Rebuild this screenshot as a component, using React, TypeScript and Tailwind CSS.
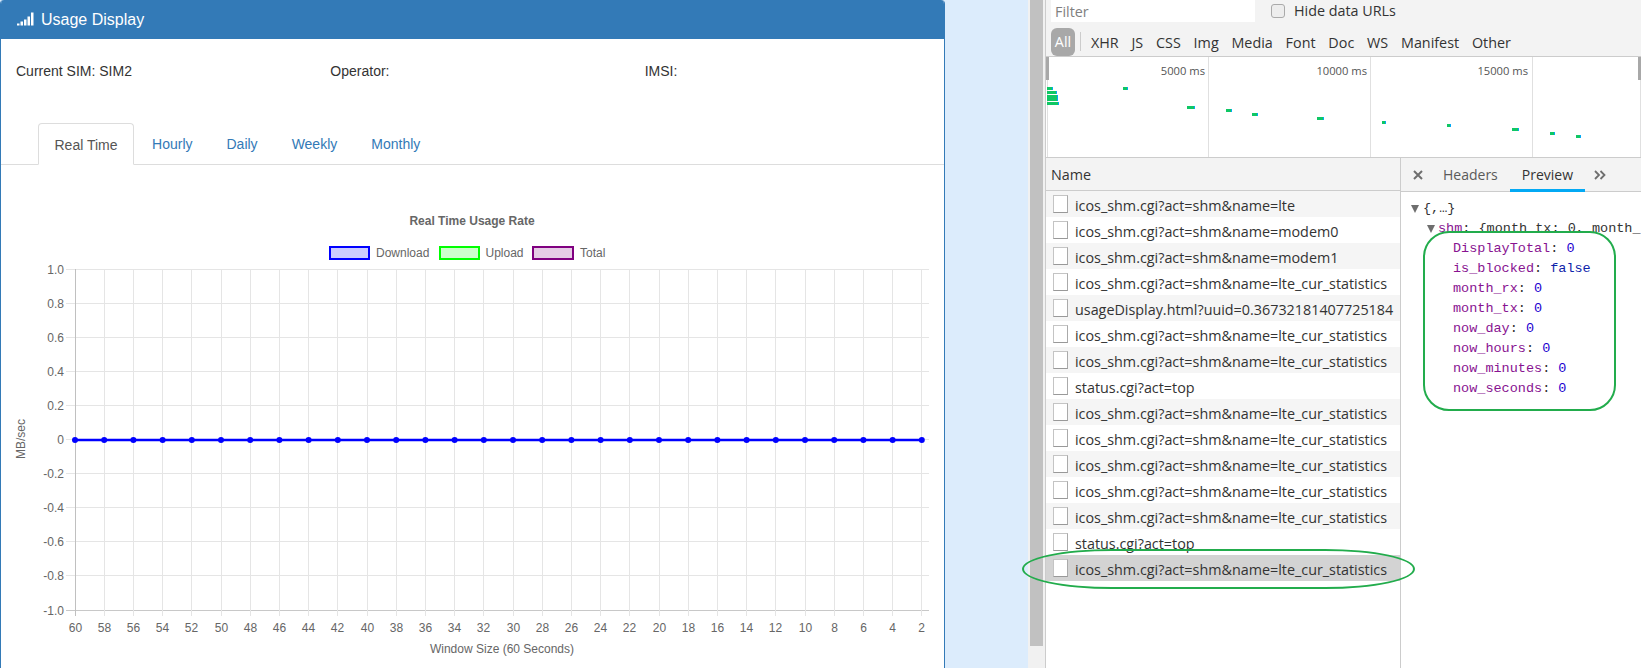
import React from "react";

const sans = "font-['Liberation_Sans',Arial,sans-serif]";
const ui = "font-['Open_Sans','Noto_Sans',sans-serif]";
const mono = "font-['Liberation_Mono',monospace]";

const yLabels = ["1.0", "0.8", "0.6", "0.4", "0.2", "0", "-0.2", "-0.4", "-0.6", "-0.8", "-1.0"];
const xLabels = Array.from({ length: 30 }, (_, i) => 60 - i * 2);
const X0 = 75;
const DX = 29.2;
const Y0 = 269.5;
const DY = 34.05;

function Chart() {
  return (
    <svg width={943} height={503} viewBox="1 165 943 503" className="block">
      <g fontFamily="'Liberation Sans', Arial, sans-serif" fontSize="12" fill="#666">
        {yLabels.map((l, i) => {
          const y = Math.floor(Y0 + DY * i) + 0.5;
          const strong = l === "-1.0";
          return (
            <g key={l}>
              <line x1={66} x2={929} y1={y} y2={y} stroke={strong ? "#c8c8c8" : "#e5e5e5"} />
              <text x={64} y={y + 4} textAnchor="end">{l}</text>
            </g>
          );
        })}
        {xLabels.map((l, i) => {
          const x = Math.floor(X0 + DX * i) + 0.5;
          return (
            <g key={l}>
              <line x1={x} x2={x} y1={269} y2={616} stroke={i === 0 ? "#c0c0c0" : "#e5e5e5"} />
              <text x={x} y={632} textAnchor="middle">{l}</text>
            </g>
          );
        })}
        <line x1={X0} x2={922} y1={440} y2={440} stroke="#0000ff" strokeWidth={2.6} />
        {xLabels.map((l, i) => (
          <circle key={l} cx={X0 + DX * i} cy={440} r={3} fill="#0000ff" />
        ))}
        <text x={472} y={225} textAnchor="middle" fontWeight="bold">Real Time Usage Rate</text>
        <rect x={330} y={247} width={39} height={12} fill="#ccccff" stroke="#0000ff" strokeWidth={2} />
        <text x={376} y={257}>Download</text>
        <rect x={440} y={247} width={39} height={12} fill="#ccffcc" stroke="#00ff00" strokeWidth={2} />
        <text x={485.5} y={257}>Upload</text>
        <rect x={533} y={247} width={40} height={12} fill="#e6cce6" stroke="#800080" strokeWidth={2} />
        <text x={580} y={257}>Total</text>
        <text transform="translate(25 439) rotate(-90)" textAnchor="middle">MB/sec</text>
        <text x={502} y={653} textAnchor="middle">Window Size (60 Seconds)</text>
      </g>
    </svg>
  );
}

function LeftPanel() {
  const tabs = ["Hourly", "Daily", "Weekly", "Monthly"];
  return (
    <div className={`${sans} w-[945px] h-full shrink-0 bg-white border-x border-[#337ab7] rounded-t-[4px] overflow-hidden flex flex-col text-[14px] text-[#333]`}>
      <div className="h-[39px] bg-[#337ab7] text-white text-[16px] flex items-center pl-[17px] gap-[7px] shrink-0 -mx-px">
        <svg width="17" height="14" viewBox="0 0 17 14" fill="#fff" className="mt-[-1px]">
          <rect x="0" y="11.5" width="2.5" height="2" />
          <rect x="3.5" y="9.5" width="2.5" height="4" />
          <rect x="7" y="7.5" width="2.5" height="6" />
          <rect x="10.5" y="4.5" width="2.5" height="9" />
          <rect x="14" y="0.5" width="2.5" height="13" />
        </svg>
        <span>Usage Display</span>
      </div>
      <div className="grid grid-cols-3 h-[84px] pt-[22px] shrink-0">
        <div className="px-[15px]">Current SIM: SIM2</div>
        <div className="px-[15px]">Operator:</div>
        <div className="px-[15px]">IMSI:</div>
      </div>
      <div className="flex h-[42px] pl-[37px] border-b border-[#ddd] gap-[2px] shrink-0">
        <div className="h-[42px] pt-[2px] px-[15.5px] flex items-center text-[#555] bg-white border border-[#ddd] border-b-white rounded-t-[4px]">Real Time</div>
        {tabs.map((t) => (
          <div key={t} className="pt-[2px] px-[16px] flex items-center text-[#337ab7]">{t}</div>
        ))}
      </div>
      <Chart />
    </div>
  );
}

const bars: [number, number, number, number][] = [
  [1047, 87, 6, 3], [1047, 91, 10, 3], [1047, 95, 11, 3], [1047, 98, 11, 3], [1047, 102, 12, 3],
  [1123, 87, 5, 3], [1187, 106, 8, 3], [1226, 109, 6, 3], [1252, 113, 6, 3], [1317, 117, 7, 3],
  [1382, 121, 4, 3], [1447, 124, 4, 3], [1512, 128, 7, 3], [1550, 132, 5, 3], [1576, 135, 5, 3],
];

function Overview() {
  return (
    <svg width={595} height={100} viewBox="1046 57 595 100" className="block bg-white">
      {[1047, 1208, 1370, 1532, 1640].map((x) => (
        <line key={x} x1={x + 0.5} x2={x + 0.5} y1={57} y2={157} stroke="#e0e0e0" />
      ))}
      <rect x={1046} y={57} width={3} height={23} fill="#a8a8a8" />
      <rect x={1638} y={57} width={3} height={23} fill="#a8a8a8" />
      {bars.map(([x, y, w, h]) => (
        <g key={`${x}-${y}`}>
          <rect x={x} y={y} width={w} height={h} fill="#03a9f4" />
          <rect x={x} y={y} width={Math.max(w - 1, 1)} height={h} fill="#0fc764" />
        </g>
      ))}
      <g fontFamily="'Open Sans', sans-serif" fontSize="11.2" fill="#555" textAnchor="end">
        <text x={1205} y={75}>5000 ms</text>
        <text x={1367} y={75}>10000 ms</text>
        <text x={1528} y={75}>15000 ms</text>
      </g>
    </svg>
  );
}

const rows = [
  "icos_shm.cgi?act=shm&name=lte",
  "icos_shm.cgi?act=shm&name=modem0",
  "icos_shm.cgi?act=shm&name=modem1",
  "icos_shm.cgi?act=shm&name=lte_cur_statistics",
  "usageDisplay.html?uuid=0.36732181407725184",
  "icos_shm.cgi?act=shm&name=lte_cur_statistics",
  "icos_shm.cgi?act=shm&name=lte_cur_statistics",
  "status.cgi?act=top",
  "icos_shm.cgi?act=shm&name=lte_cur_statistics",
  "icos_shm.cgi?act=shm&name=lte_cur_statistics",
  "icos_shm.cgi?act=shm&name=lte_cur_statistics",
  "icos_shm.cgi?act=shm&name=lte_cur_statistics",
  "icos_shm.cgi?act=shm&name=lte_cur_statistics",
  "status.cgi?act=top",
  "icos_shm.cgi?act=shm&name=lte_cur_statistics",
];

function rowBg(i: number) {
  if (i === 14) return "bg-[#d3d3d3]";
  return i % 2 === 0 ? "bg-[#f5f5f5]" : "bg-white";
}

const fields: [string, string, string][] = [
  ["DisplayTotal", "0", "text-[#1c00cf]"],
  ["is_blocked", "false", "text-[#0d22aa]"],
  ["month_rx", "0", "text-[#1c00cf]"],
  ["month_tx", "0", "text-[#1c00cf]"],
  ["now_day", "0", "text-[#1c00cf]"],
  ["now_hours", "0", "text-[#1c00cf]"],
  ["now_minutes", "0", "text-[#1c00cf]"],
  ["now_seconds", "0", "text-[#1c00cf]"],
];

function Preview() {
  return (
    <div className={`${mono} relative pt-[7px] text-[13.5px] leading-[20px] text-[#333] whitespace-nowrap overflow-hidden flex-1`}>
      <div className="flex items-center h-[20px] pl-[10px] gap-[4px]">
        <span className="w-0 h-0 border-x-[4.5px] border-x-transparent border-t-[8px] border-t-[#6e6e6e]" />
        <span>{"{,…}"}</span>
      </div>
      <div className="flex items-center h-[20px] pl-[26px] gap-[3px]">
        <span className="w-0 h-0 border-x-[4.5px] border-x-transparent border-t-[8px] border-t-[#6e6e6e]" />
        <span>
          <span className="text-[#881391]">shm</span>: {"{month_tx: 0, month_rx: 0, is_blocked: false}"}
        </span>
      </div>
      <div className="absolute left-[22px] top-[39px] w-[193px] h-[180px] bg-white border-2 border-[#22ac4c] rounded-[26px]" />
      <div className="relative pl-[52px]">
        {fields.map(([k, v, c]) => (
          <div key={k} className="h-[20px]">
            <span className="text-[#881391]">{k}</span>: <span className={c}>{v}</span>
          </div>
        ))}
      </div>
    </div>
  );
}

function DevTools() {
  const types = ["XHR", "JS", "CSS", "Img", "Media", "Font", "Doc", "WS", "Manifest", "Other"];
  return (
    <div className={`${ui} flex-1 h-full bg-[#f3f3f3] border-l border-[#ccc] flex flex-col text-[14.35px] text-[#333] min-w-0`}>
      <div className="h-[22px] pl-[5px] flex items-center shrink-0">
        <div className="w-[204px] h-[22px] bg-white pl-[4px] text-[#808080] leading-[24px]">Filter</div>
        <div className="ml-[16px] w-[14px] h-[14px] rounded-[3px] border border-[#aaa] bg-[#ededed]" />
        <div className="ml-[9px]">Hide data URLs</div>
      </div>
      <div className="h-[35px] pl-[5px] flex items-end border-b border-[#ccc] shrink-0">
        <div className="w-[24px] h-[28px] rounded-[6px] bg-[#a8a8a8] text-white flex items-center justify-center">All</div>
        <div className="w-px h-[19px] bg-[#ccc] mx-[5px] mb-[5px]" />
        <div className="flex gap-[12.8px] pl-[5px] pt-[2px] h-[28px] items-center">
          {types.map((t) => (
            <span key={t}>{t}</span>
          ))}
        </div>
      </div>
      <div className="h-[101px] border-b border-[#ccc] shrink-0">
        <Overview />
      </div>
      <div className="flex-1 flex min-h-0">
        <div className="w-[355px] border-r border-[#ccc] bg-white flex flex-col shrink-0">
          <div className="h-[33px] bg-[#f3f3f3] border-b border-[#ccc] pl-[5px] pt-[2px] flex items-center shrink-0">Name</div>
          {rows.map((r, i) => (
            <div key={i} className={`${rowBg(i)} h-[26px] flex items-center pl-[7px] gap-[7px] whitespace-nowrap shrink-0`}>
              <span className="w-[15px] h-[18px] bg-white border border-[#c4c4c4] border-b-[#999] border-r-[#aaa] shrink-0" />
              <span className="pt-[4px]">{r}</span>
            </div>
          ))}
        </div>
        <div className="flex-1 min-w-0 bg-white flex flex-col">
          <div className="h-[34px] bg-[#f3f3f3] border-b border-[#ccc] flex items-center shrink-0 text-[#5a5a5a] text-[14px]">
            <svg width="10" height="10" viewBox="0 0 10 10" className="ml-[12px]" stroke="#6e6e6e" strokeWidth="2">
              <path d="M1 1 L9 9 M9 1 L1 9" />
            </svg>
            <span className="ml-[20px]">Headers</span>
            <span className="relative ml-[12px] px-[12px] h-full flex items-center text-[#333]">
              Preview
              <span className="absolute left-0 right-0 bottom-[-1px] h-[3px] bg-[#03a9f4]" />
            </span>
            <svg width="12" height="10" viewBox="0 0 12 10" className="ml-[9px]" fill="none" stroke="#6e6e6e" strokeWidth="1.8">
              <path d="M1 1 L5 5 L1 9 M6.5 1 L10.5 5 L6.5 9" />
            </svg>
          </div>
          <Preview />
        </div>
      </div>
    </div>
  );
}

export default function App() {
  return (
    <div className="relative w-[1641px] h-[668px] overflow-hidden bg-[#dcecfc] flex">
      <LeftPanel />
      <div className="w-[83px] shrink-0" />
      <div className="w-[17px] h-full bg-[#f1f1f1] shrink-0 px-[2px]">
        <div className="h-[646px] bg-[#c1c1c1] w-[13px]" />
      </div>
      <DevTools />
      <div className="absolute left-[1022px] top-[549px] w-[393px] h-[40px] border-2 border-[#22ac4c] rounded-[90px/20px] pointer-events-none" />
    </div>
  );
}
